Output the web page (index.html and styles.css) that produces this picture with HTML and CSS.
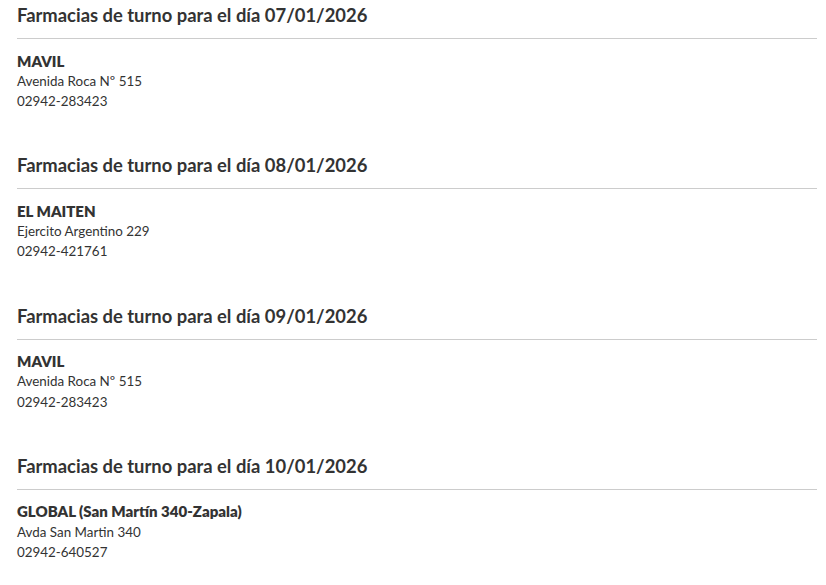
FILE: index.html
```html
<!DOCTYPE html>
<html lang="es">
<head>
<meta charset="utf-8">
<title>Farmacias de turno</title>
<link rel="stylesheet" href="styles.css">
</head>
<body>
<main class="page">
  <section class="day">
    <h2 class="day-title">Farmacias de turno para el día 07/01/2026</h2>
    <div class="pharmacy">
      <div class="ph-name">MAVIL</div>
      <div class="ph-line">Avenida Roca Nº 515</div>
      <div class="ph-line">02942-283423</div>
    </div>
  </section>
  <section class="day">
    <h2 class="day-title">Farmacias de turno para el día 08/01/2026</h2>
    <div class="pharmacy">
      <div class="ph-name">EL MAITEN</div>
      <div class="ph-line">Ejercito Argentino 229</div>
      <div class="ph-line">02942-421761</div>
    </div>
  </section>
  <section class="day">
    <h2 class="day-title">Farmacias de turno para el día 09/01/2026</h2>
    <div class="pharmacy">
      <div class="ph-name">MAVIL</div>
      <div class="ph-line">Avenida Roca Nº 515</div>
      <div class="ph-line">02942-283423</div>
    </div>
  </section>
  <section class="day">
    <h2 class="day-title">Farmacias de turno para el día 10/01/2026</h2>
    <div class="pharmacy">
      <div class="ph-name">GLOBAL (San Martín 340-Zapala)</div>
      <div class="ph-line">Avda San Martin 340</div>
      <div class="ph-line">02942-640527</div>
    </div>
  </section>
</main>
</body>
</html>
```
FILE: styles.css
```css
html, body {
  margin: 0;
  padding: 0;
  background: #fff;
}
body {
  font-family: Lato, "Noto Sans", "Liberation Sans", sans-serif;
  color: #333;
}
.page {
  width: 800px;
  padding: 1px 0 0 17px;
  display: flex;
  flex-direction: column;
  gap: 39.9px;
}
.day-title {
  margin: 0;
  font-size: 18.4px;
  font-weight: 700;
  line-height: 28px;
  padding-bottom: 9px;
  border-bottom: 1px solid #ccc;
  color: #333;
}
.pharmacy {
  margin-top: 11.5px;
  font-size: 13.4px;
  line-height: 20.3px;
}
.ph-name {
  font-weight: 800;
  font-size: 15px;
}
.ph-line {
  font-weight: 400;
}
```
